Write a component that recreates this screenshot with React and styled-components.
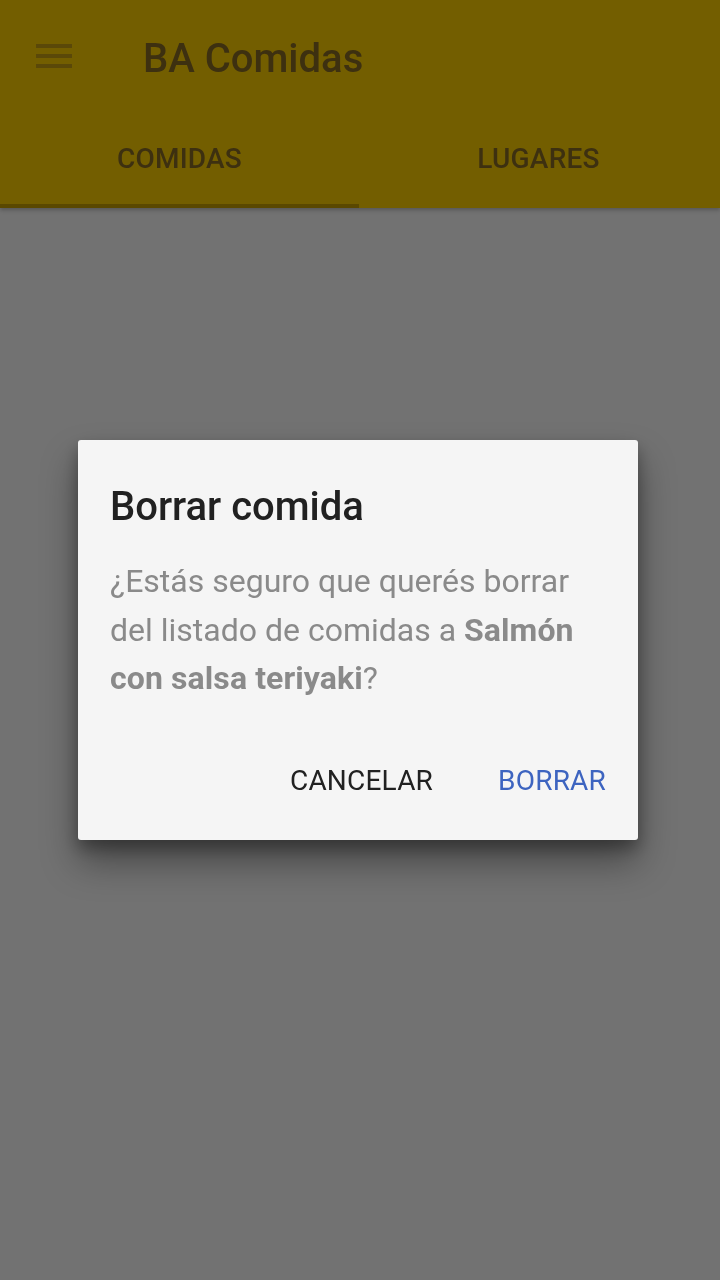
import React from 'react'
import styled, { createGlobalStyle } from 'styled-components'

const GlobalStyle = createGlobalStyle`
  html, body {
    margin: 0;
    padding: 0;
    background: #727272;
    font-family: Roboto, "Noto Sans", sans-serif;
  }
  * { box-sizing: border-box; }
`

export default function App() {
  return (
    <>
      <GlobalStyle />
      <Screen>
        <AppBar>
          <Toolbar>
            <MenuButton aria-label="menu">
              <svg width="36" height="24" viewBox="0 0 36 24">
                <rect x="0" y="0" width="36" height="4" fill="currentColor" />
                <rect x="0" y="10" width="36" height="4" fill="currentColor" />
                <rect x="0" y="20" width="36" height="4" fill="currentColor" />
              </svg>
            </MenuButton>
            <Title>BA Comidas</Title>
          </Toolbar>
          <Tabs>
            <Tab active>COMIDAS</Tab>
            <Tab>LUGARES</Tab>
          </Tabs>
        </AppBar>
        <Content />
      </Screen>

      <Scrim>
        <Dialog>
          <DialogTitle>Borrar comida</DialogTitle>
          <DialogBody>
            ¿Estás seguro que querés borrar del listado de comidas a{' '}
            <b>Salmón con salsa teriyaki</b>?
          </DialogBody>
          <Actions>
            <ActionButton>CANCELAR</ActionButton>
            <ActionButton primary>BORRAR</ActionButton>
          </Actions>
        </Dialog>
      </Scrim>
    </>
  )
}

const Screen = styled.div`
  width: 100%;
  min-height: 1280px;
  display: flex;
  flex-direction: column;
  background: #727272;
`

const AppBar = styled.header`
  background: #735e00;
  color: #3d3010;
  box-shadow: 0 2px 4px rgba(0, 0, 0, 0.25);
  position: relative;
  z-index: 1;
`

const Toolbar = styled.div`
  height: 112px;
  display: flex;
  align-items: center;
`

const MenuButton = styled.div`
  width: 108px;
  height: 112px;
  display: flex;
  align-items: center;
  padding-left: 36px;
  color: #5a4808;
`

const Title = styled.h1`
  margin: 6px 0 0 35px;
  font-size: 40px;
  font-weight: 500;
  line-height: 48px;
`

const Tabs = styled.div`
  display: flex;
  height: 96px;
  padding-right: 2px;
`

const Tab = styled.div`
  flex: 1;
  display: flex;
  align-items: center;
  justify-content: center;
  font-size: 28px;
  font-weight: 500;
  letter-spacing: 0.2px;
  border-bottom: 4px solid ${p => (p.active ? '#5a4800' : 'transparent')};
`

const Content = styled.main`
  flex: 1;
`

const Scrim = styled.div`
  position: fixed;
  inset: 0;
  display: flex;
  align-items: center;
  justify-content: center;
`

const Dialog = styled.div`
  width: 560px;
  height: 400px;
  margin-left: -4px;
  background: #f5f5f5;
  border-radius: 3px;
  box-shadow: 0 22px 36px rgba(0, 0, 0, 0.38), 0 8px 16px rgba(0, 0, 0, 0.3);
  padding: 43px 48px 0 32px;
  display: flex;
  flex-direction: column;
`

const DialogTitle = styled.h2`
  margin: 0;
  font-size: 40px;
  font-weight: 500;
  line-height: 48px;
  color: #212121;
`

const DialogBody = styled.p`
  margin: 26px 0 0;
  font-size: 32px;
  line-height: 48.5px;
  color: #8a8a8a;

  & b {
    font-weight: 700;
    letter-spacing: 0.1px;
  }
`

const Actions = styled.div`
  margin: auto -48px 24px 0;
  display: flex;
  justify-content: flex-end;
  gap: 33px;
  padding-right: 16px;
`

const ActionButton = styled.div`
  height: 72px;
  padding: 0 16px;
  display: flex;
  align-items: center;
  font-size: 28px;
  font-weight: 400;
  letter-spacing: 0.2px;
  color: ${p => (p.primary ? '#3d64c0' : '#212121')};
`
